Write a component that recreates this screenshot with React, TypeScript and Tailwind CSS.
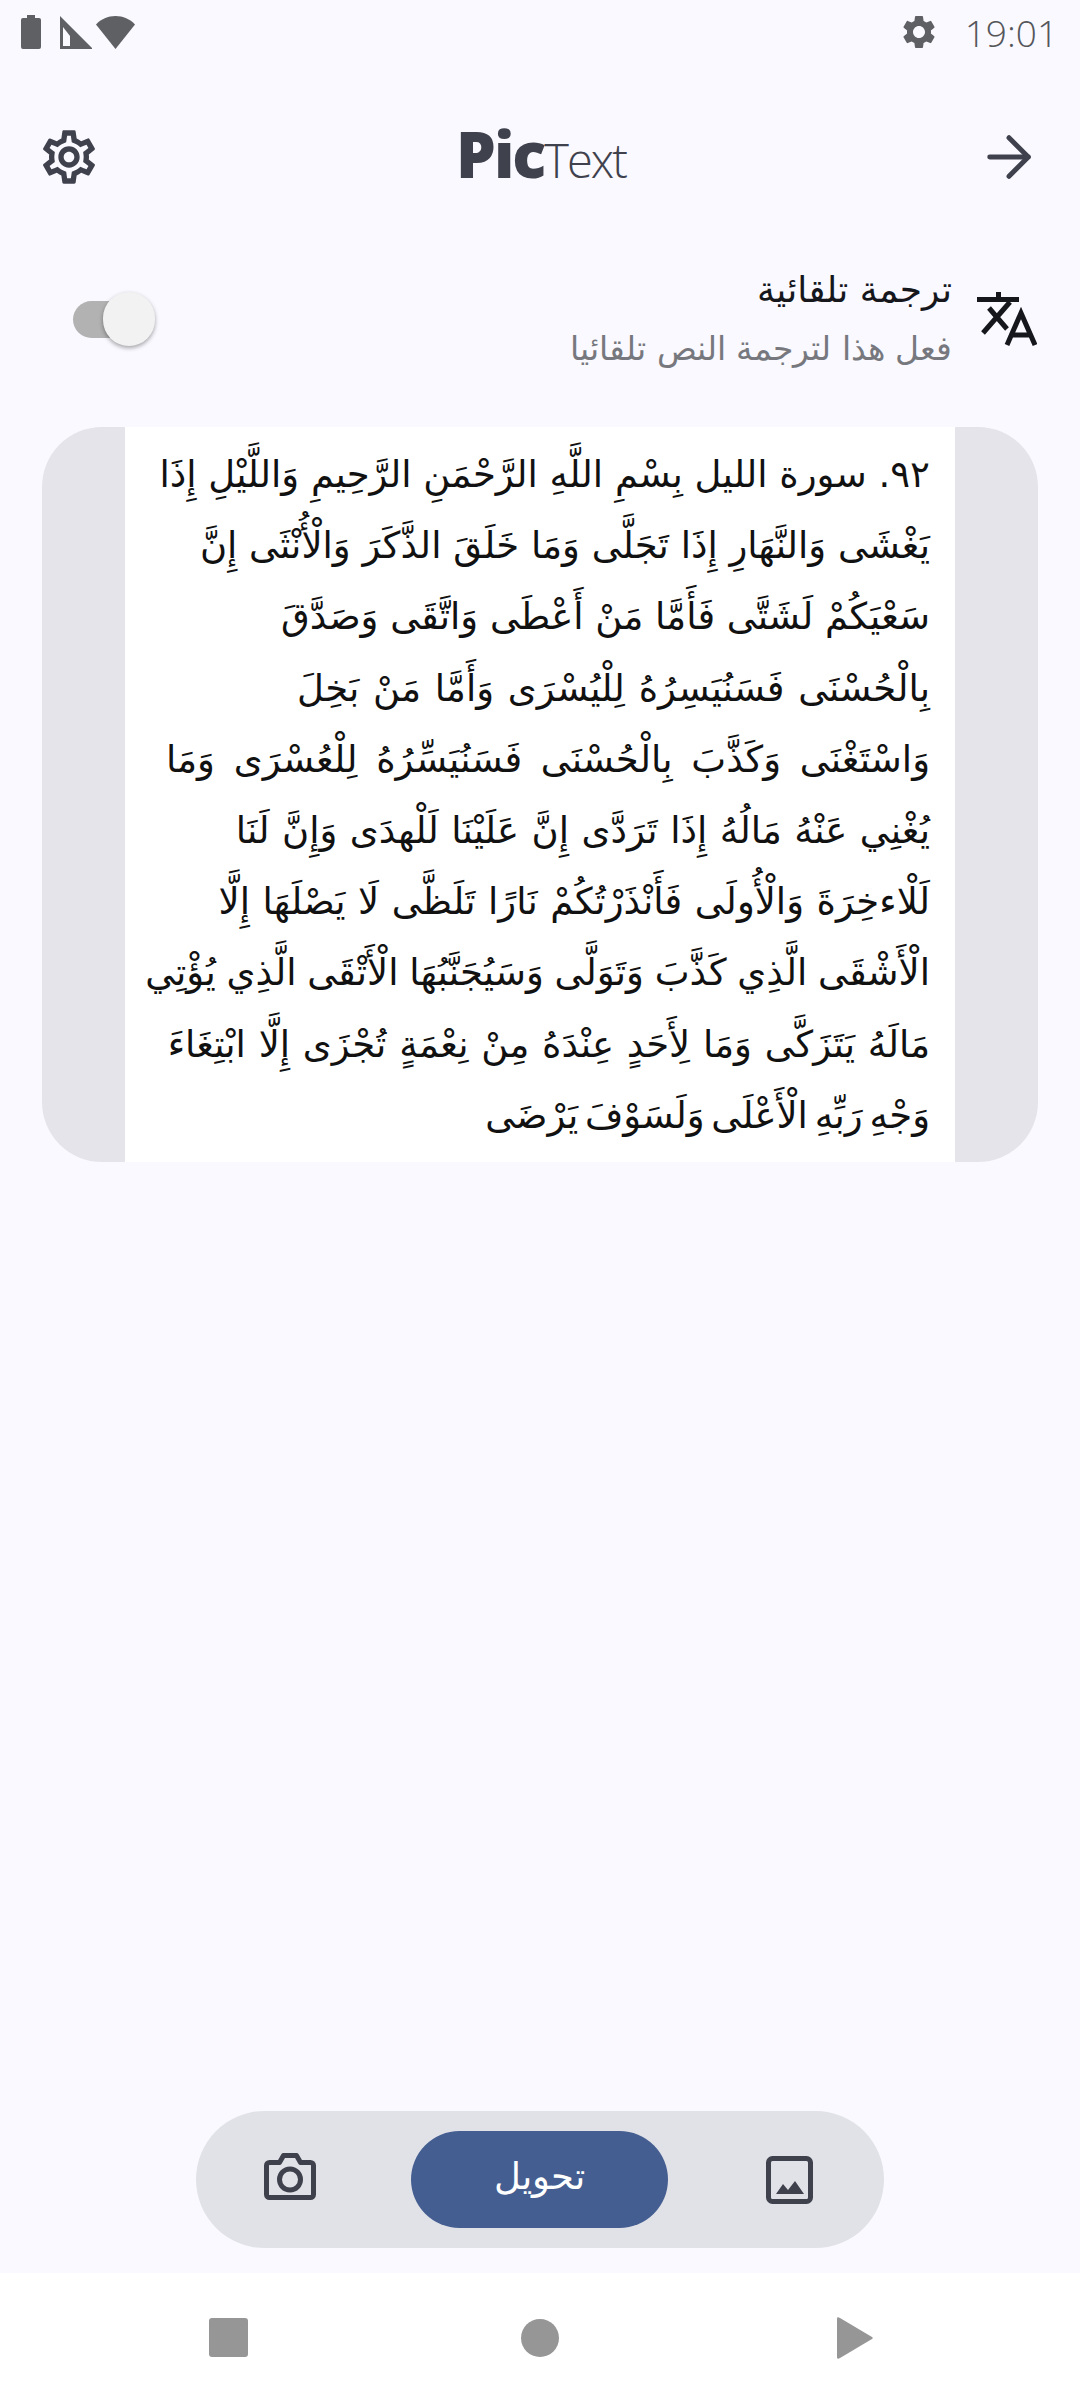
import { ArrowRight } from "lucide-react";
import { MdOutlineSettings, MdSettings } from "react-icons/md";

// spacing per line, the screenshot's text is a photo with its own word gaps
const AYAT = [
	{ text: "٩٢. سورة الليل بِسْمِ اللَّهِ الرَّحْمَنِ الرَّحِيمِ وَاللَّيْلِ إِذَا", gap: "" },
	{ text: "يَغْشَى وَالنَّهَارِ إِذَا تَجَلَّى وَمَا خَلَقَ الذَّكَرَ وَالْأُنْثَى إِنَّ", gap: "" },
	{ text: "سَعْيَكُمْ لَشَتَّى فَأَمَّا مَنْ أَعْطَى وَاتَّقَى وَصَدَّقَ", gap: "" },
	{ text: "بِالْحُسْنَى فَسَنُيَسِرُهُ لِلْيُسْرَى وَأَمَّا مَنْ بَخِلَ", gap: "[word-spacing:2px]" },
	{ text: "وَاسْتَغْنَى وَكَذَّبَ بِالْحُسْنَى فَسَنُيَسِّرُهُ لِلْعُسْرَى وَمَا", gap: "[word-spacing:7px]" },
	{ text: "يُغْنِي عَنْهُ مَالُهُ إِذَا تَرَدَّى إِنَّ عَلَيْنَا لَلْهدَى وَإِنَّ لَنَا", gap: "[word-spacing:0.7px]" },
	{ text: "لَلْاءخِرَةَ وَالْأُولَى فَأَنْذَرْتُكُمْ نَارًا تَلَظَّى لَا يَصْلَهَا إِلَّا", gap: "[word-spacing:0.8px]" },
	{ text: "الْأَشْقَى الَّذِي كَذَّبَ وَتَوَلَّى وَسَيُجَنَّبُهَا الْأَتْقَى الَّذِي يُؤْتِي", gap: "[word-spacing:-1px]" },
	{ text: "مَالَهُ يَتَزَكَّى وَمَا لِأَحَدٍ عِنْدَهُ مِنْ نِعْمَةٍ تُجْزَى إِلَّا ابْتِغَاءَ", gap: "[word-spacing:1px]" },
	{ text: "وَجْهِ رَبِّهِ الْأَعْلَى وَلَسَوْفَ يَرْضَى", gap: "[word-spacing:-5px]" },
];

const StatusBar = () => (
	<div className="flex h-[64px] items-center justify-between pl-[21px] pr-[22px] text-[#5f6064]">
		<div className="flex items-center">
			<svg width="20" height="34" viewBox="0 0 20 34" fill="currentColor">
				<path d="M6 0h8v3h4a2 2 0 0 1 2 2v27a2 2 0 0 1-2 2H2a2 2 0 0 1-2-2V5a2 2 0 0 1 2-2h4z" />
			</svg>
			<svg className="ml-[19px]" width="32" height="33" viewBox="0 0 32 33">
				<path d="M0 0l32 32v1H0z" fill="currentColor" />
				<path d="M3 11l7 9v10H3z" fill="#f9f9ff" />
			</svg>
			<svg className="ml-[4px]" width="39" height="33" viewBox="0 0 39 33" fill="currentColor">
				<path d="M19.500 0C27 0 34 3 39 8.500L19.500 33 0 8.500C5 3 12 0 19.500 0z" />
			</svg>
		</div>
		<div className="flex items-center gap-[26px]">
			<MdSettings size={40} />
			<span className="font-['Open_Sans'] text-[37px] font-light leading-none text-[#55565a]">19:01</span>
		</div>
	</div>
);

const Header = () => (
	<div className="mt-[57px] flex h-[72px] items-center justify-between pl-[37px] pr-[38px] text-[#3f414d]">
		<MdOutlineSettings size={64} />
		<div className="mb-[8px] ml-[5px] font-['Open_Sans'] text-[63px] leading-none tracking-[-2px]">
			<span className="font-extrabold">Pic</span>
			<span className="text-[47px] font-light">Text</span>
		</div>
		<ArrowRight size={66} strokeWidth={1.8} />
	</div>
);

const TranslateIcon = () => (
	<svg width="60" height="54" viewBox="0 0 60 54" fill="none" stroke="#16171c" strokeWidth="5">
		<path d="M0 7.500h42M21.500 0v6M33 10L6 41M12 16l18 21" />
		<path d="M30 53L44 21l14 32M35 43h18" />
	</svg>
);

const AutoTranslateRow = () => (
	<div className="mt-[66px] flex h-[120px] items-center justify-between pl-[73px] pr-[43px]">
		<div className="relative h-[37px] w-[60px] rounded-l-full bg-[#b2b2b2]">
			<div className="absolute left-[30px] top-[-9px] h-[54px] w-[52px] rounded-full bg-[#f2f2f2] shadow-[0_2px_4px_rgba(0,0,0,0.35)]" />
		</div>
		<div className="flex items-center gap-[25px]">
			<div dir="rtl" className="flex flex-col items-start pt-[5px] font-['DejaVu_Sans',sans-serif]">
				<span className="text-[36px] leading-[50px] text-[#16171c]">ترجمة تلقائية</span>
				<span className="mt-[5px] text-[33px] font-light leading-[58px] text-[#77787e]">فعل هذا لترجمة النص تلقائيا</span>
			</div>
			<TranslateIcon />
		</div>
	</div>
);

const ImageCard = () => (
	<div className="mx-[42px] mt-[48px] h-[735px] overflow-hidden rounded-[60px] bg-[#e4e4ea]">
		<div
			dir="rtl"
			className="mx-[83px] flex h-full flex-col bg-white pr-[25px] pt-[12px] font-['DejaVu_Sans',sans-serif] text-[37px] leading-[71.2px] text-[#111111]"
		>
			{AYAT.map((line) => (
				<div key={line.text} className={`whitespace-nowrap ${line.gap}`}>
					{line.text}
				</div>
			))}
		</div>
	</div>
);

const CameraIcon = () => (
	<svg className="mb-[6px]" width="52" height="47" viewBox="0 0 52 47" fill="none" stroke="currentColor" strokeWidth="5" strokeLinejoin="round">
		<path d="M2.500 12.500a3 3 0 0 1 3-3h10l4-7h13l4 7h10a3 3 0 0 1 3 3v29a3 3 0 0 1-3 3h-41a3 3 0 0 1-3-3z" />
		<circle cx="26" cy="26.500" r="10.500" />
	</svg>
);

const ImageIcon = () => (
	<svg width="47" height="48" viewBox="0 0 47 48" fill="none">
		<rect x="2.500" y="2.500" width="42" height="43" rx="4" stroke="currentColor" strokeWidth="5" />
		<path d="M10 38l7-10 5 6 7-9 9 13z" fill="currentColor" />
	</svg>
);

const ActionBar = () => (
	<div className="mx-[196px] flex h-[137px] items-center justify-between rounded-full bg-[#e1e2e7] pl-[68px] pr-[71px] text-[#3f414d]">
		<CameraIcon />
		<button className="mr-[3px] flex h-[97px] w-[257px] items-center justify-center rounded-full bg-[#445e91] pb-[5px]">
			<span dir="rtl" className="font-['DejaVu_Sans',sans-serif] text-[37px] font-light text-white">تحويل</span>
		</button>
		<ImageIcon />
	</div>
);

const NavBar = () => (
	<div className="mt-[25px] flex h-[127px] items-center justify-between bg-white pl-[209px] pr-[207px] pt-[2px] text-[#969696]">
		<div className="h-[39px] w-[39px] rounded-[3px] bg-[#969696]" />
		<div className="mr-[5px] h-[38px] w-[38px] rounded-full bg-[#969696]" />
		<svg width="36" height="42" viewBox="0 0 36 42" fill="currentColor">
			<path d="M0 2c0-2 1-2 3-1l32 19c1 .6 1 1.400 0 2L3 41c-2 1-3 1-3-1z" />
		</svg>
	</div>
);

export default function App() {
	return (
		<div className="flex h-[2400px] w-[1080px] flex-col bg-[#f9f9ff]">
			<StatusBar />
			<Header />
			<AutoTranslateRow />
			<ImageCard />
			<div className="flex-1" />
			<ActionBar />
			<NavBar />
		</div>
	);
}
